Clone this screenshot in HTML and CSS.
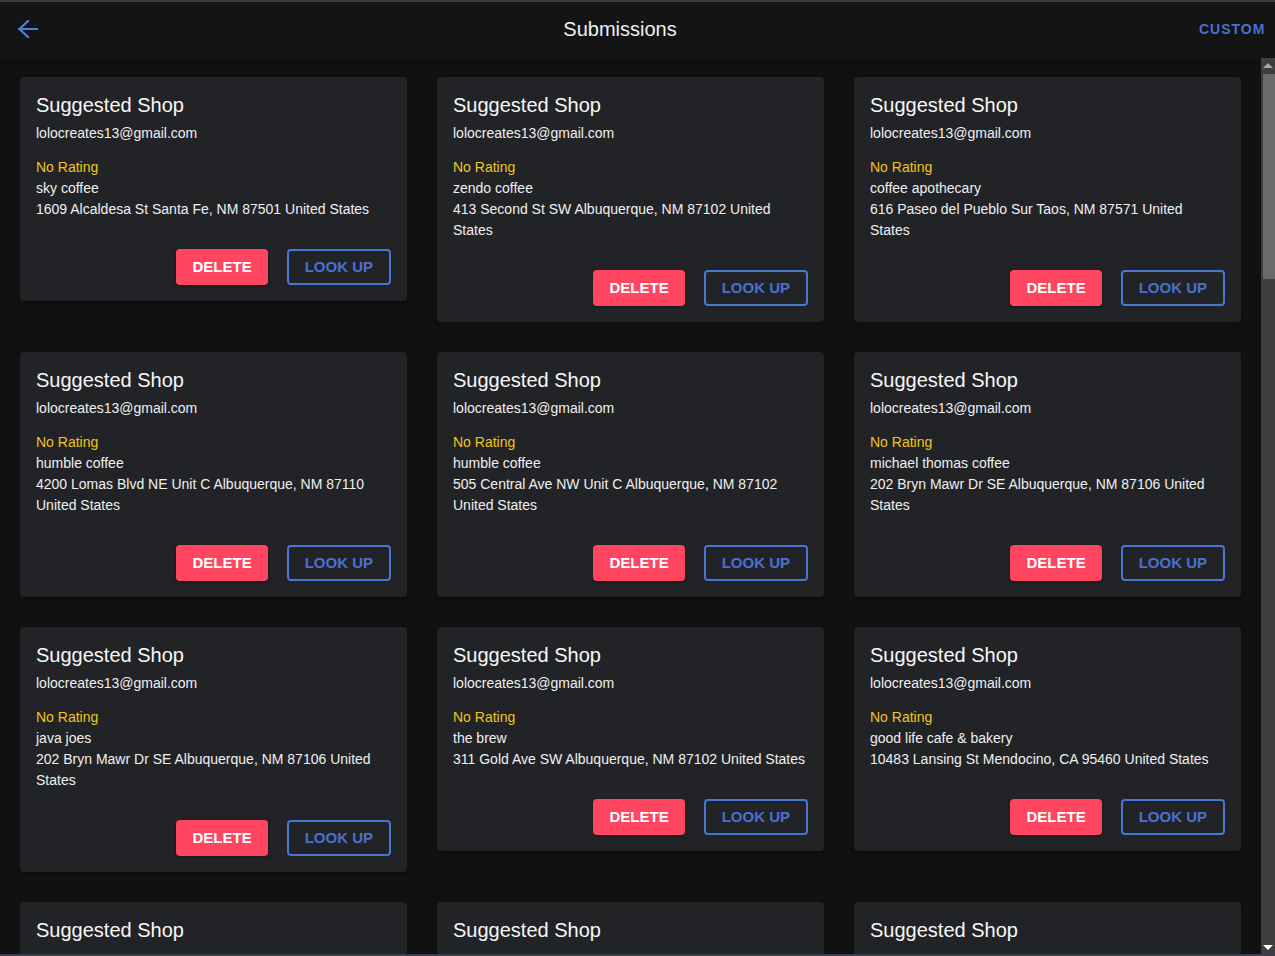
FILE: index.html
```html
<!DOCTYPE html>
<html lang="en">
<head>
<meta charset="utf-8">
<title>Submissions</title>
<link rel="stylesheet" href="styles.css">
</head>
<body>
<div class="frame">
  <header class="header">
    <button class="back" aria-label="Back">
      <svg width="20" height="18" viewBox="0 0 20 18"><path d="M1 9H19M10 1L1.5 9L10 17" fill="none" stroke="#4d7fdc" stroke-width="2.2" stroke-linecap="square"/></svg>
    </button>
    <h1 class="title">Submissions</h1>
    <button class="custom">CUSTOM</button>
  </header>
  <div class="main">
    <div class="content">
      <div class="grid">
        <div class="card">
          <h2 class="card-title">Suggested Shop</h2>
          <div class="line">lolocreates13@gmail.com</div>
          <div class="line rating">No Rating</div>
          <div class="line">sky coffee</div>
          <div class="line">1609 Alcaldesa St Santa Fe, NM 87501 United States</div>
          <div class="actions"><button class="btn delete">DELETE</button><button class="btn lookup">LOOK UP</button></div>
        </div>
        <div class="card">
          <h2 class="card-title">Suggested Shop</h2>
          <div class="line">lolocreates13@gmail.com</div>
          <div class="line rating">No Rating</div>
          <div class="line">zendo coffee</div>
          <div class="line">413 Second St SW Albuquerque, NM 87102 United States</div>
          <div class="actions"><button class="btn delete">DELETE</button><button class="btn lookup">LOOK UP</button></div>
        </div>
        <div class="card">
          <h2 class="card-title">Suggested Shop</h2>
          <div class="line">lolocreates13@gmail.com</div>
          <div class="line rating">No Rating</div>
          <div class="line">coffee apothecary</div>
          <div class="line">616 Paseo del Pueblo Sur Taos, NM 87571 United States</div>
          <div class="actions"><button class="btn delete">DELETE</button><button class="btn lookup">LOOK UP</button></div>
        </div>
        <div class="card">
          <h2 class="card-title">Suggested Shop</h2>
          <div class="line">lolocreates13@gmail.com</div>
          <div class="line rating">No Rating</div>
          <div class="line">humble coffee</div>
          <div class="line">4200 Lomas Blvd NE Unit C Albuquerque, NM 87110 United States</div>
          <div class="actions"><button class="btn delete">DELETE</button><button class="btn lookup">LOOK UP</button></div>
        </div>
        <div class="card">
          <h2 class="card-title">Suggested Shop</h2>
          <div class="line">lolocreates13@gmail.com</div>
          <div class="line rating">No Rating</div>
          <div class="line">humble coffee</div>
          <div class="line">505 Central Ave NW Unit C Albuquerque, NM 87102 United States</div>
          <div class="actions"><button class="btn delete">DELETE</button><button class="btn lookup">LOOK UP</button></div>
        </div>
        <div class="card">
          <h2 class="card-title">Suggested Shop</h2>
          <div class="line">lolocreates13@gmail.com</div>
          <div class="line rating">No Rating</div>
          <div class="line">michael thomas coffee</div>
          <div class="line">202 Bryn Mawr Dr SE Albuquerque, NM 87106 United States</div>
          <div class="actions"><button class="btn delete">DELETE</button><button class="btn lookup">LOOK UP</button></div>
        </div>
        <div class="card">
          <h2 class="card-title">Suggested Shop</h2>
          <div class="line">lolocreates13@gmail.com</div>
          <div class="line rating">No Rating</div>
          <div class="line">java joes</div>
          <div class="line">202 Bryn Mawr Dr SE Albuquerque, NM 87106 United States</div>
          <div class="actions"><button class="btn delete">DELETE</button><button class="btn lookup">LOOK UP</button></div>
        </div>
        <div class="card">
          <h2 class="card-title">Suggested Shop</h2>
          <div class="line">lolocreates13@gmail.com</div>
          <div class="line rating">No Rating</div>
          <div class="line">the brew</div>
          <div class="line">311 Gold Ave SW Albuquerque, NM 87102 United States</div>
          <div class="actions"><button class="btn delete">DELETE</button><button class="btn lookup">LOOK UP</button></div>
        </div>
        <div class="card">
          <h2 class="card-title">Suggested Shop</h2>
          <div class="line">lolocreates13@gmail.com</div>
          <div class="line rating">No Rating</div>
          <div class="line">good life cafe &amp; bakery</div>
          <div class="line">10483 Lansing St Mendocino, CA 95460 United States</div>
          <div class="actions"><button class="btn delete">DELETE</button><button class="btn lookup">LOOK UP</button></div>
        </div>
        <div class="card card-cut">
          <h2 class="card-title">Suggested Shop</h2>
        </div>
        <div class="card card-cut">
          <h2 class="card-title">Suggested Shop</h2>
        </div>
        <div class="card card-cut">
          <h2 class="card-title">Suggested Shop</h2>
        </div>
      </div>
    </div>
    <div class="scrollbar">
      <div class="arrow up"></div>
      <div class="track"><div class="thumb"></div></div>
      <div class="arrow down"></div>
    </div>
  </div>
</div>
</body>
</html>
```

FILE: styles.css
```css
* { box-sizing: border-box; }
html, body { margin: 0; padding: 0; }
body {
  background: #111111;
  font-family: "Liberation Sans", Arial, sans-serif;
  color: #f2f2f2;
  overflow: hidden;
}
.frame {
  height: 956px;
  display: flex;
  flex-direction: column;
  border-top: 2px solid #3a3d3f;
  border-bottom: 2px solid #3b4048;
}
.header {
  height: 56px;
  flex: none;
  background: #141414;
  display: flex;
  align-items: center;
}
.back {
  width: 50px;
  height: 56px;
  padding: 0 0 0 18px;
  background: none;
  border: 0;
  display: flex;
  align-items: center;
  justify-content: flex-start;
}
.back svg { display: block; margin-top: -2px; }
.title {
  flex: 1;
  margin: 0;
  text-align: center;
  font-size: 20px;
  font-weight: normal;
  color: #f0f0f0;
  line-height: 24px;
  margin-top: -3px;
}
.custom {
  width: 85px;
  height: 56px;
  padding: 0 0 0 9px;
  margin-top: -3px;
  background: none;
  border: 0;
  text-align: left;
  font-family: "Liberation Sans", Arial, sans-serif;
  font-weight: bold;
  font-size: 14px;
  letter-spacing: 1px;
  color: #4a70cf;
}
.main {
  flex: 1;
  display: flex;
  min-height: 0;
}
.content {
  flex: 1;
  overflow: hidden;
  padding: 19px 19px 0 20px;
}
.grid {
  display: grid;
  grid-template-columns: repeat(3, 387px);
  column-gap: 30px;
  row-gap: 30px;
  align-items: start;
}
.card {
  background: #222327;
  border-radius: 4px;
  padding: 16px 16px 16px 16px;
  box-shadow: 0 1px 3px rgba(0, 0, 0, 0.4);
}
.card-cut { min-height: 80px; }
.card-title {
  margin: 0 0 6px 0;
  font-size: 20px;
  line-height: 24px;
  font-weight: normal;
  color: #f7f7f7;
}
.line {
  font-size: 14px;
  line-height: 21px;
  color: #f0f0f0;
}
.rating {
  margin-top: 13px;
  color: #f2c41c;
}
.actions {
  margin-top: 29px;
  display: flex;
  justify-content: flex-end;
  gap: 19px;
}
.btn {
  height: 36px;
  border-radius: 4px;
  font-family: "Liberation Sans", Arial, sans-serif;
  font-weight: bold;
  font-size: 15px;
  letter-spacing: 0;
  padding: 0 16px 1px;
  cursor: pointer;
}
.delete {
  background: #ff4560;
  color: #ffffff;
  border: 0;
  box-shadow: 0 1px 3px rgba(0, 0, 0, 0.35);
}
.lookup {
  background: transparent;
  color: #4a70cf;
  border: 2px solid #4876d6;
}
.scrollbar {
  width: 14px;
  flex: none;
  background: #3e3e3e;
  display: flex;
  flex-direction: column;
  align-items: stretch;
}
.arrow {
  height: 14px;
  flex: none;
  display: flex;
  align-items: center;
  justify-content: center;
}
.arrow.up::before {
  content: "";
  border-left: 5px solid transparent;
  border-right: 5px solid transparent;
  border-bottom: 5px solid #a6a6a6;
}
.arrow.down::before {
  content: "";
  border-left: 5px solid transparent;
  border-right: 5px solid transparent;
  border-top: 5px solid #ffffff;
}
.track {
  flex: 1;
  padding: 2px 0 0 2px;
}
.thumb {
  height: 205px;
  background: #6a6a6a;
}
```
